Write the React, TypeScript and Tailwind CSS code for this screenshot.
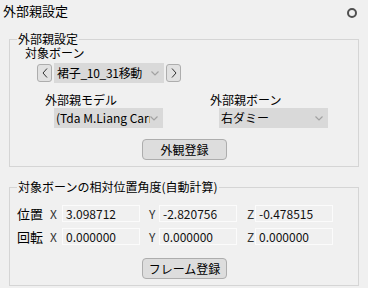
import type { ReactNode } from 'react'

function Chevron() {
  return (
    <svg width="8" height="5" viewBox="0 0 8 5" className="flex-shrink-0">
      <polyline points="0.5,0.5 4,4 7.5,0.5" fill="none" stroke="#a2a2a2" strokeWidth="1.2" />
    </svg>
  )
}

function ArrowButton({ dir }: { dir: 'left' | 'right' }) {
  return (
    <div className="w-[15px] h-[18px] flex items-center justify-center rounded-[3px] border border-[#adadad] bg-[#e1e1e1]">
      <svg width="6" height="10" viewBox="0 0 6 10">
        <polyline
          points={dir === 'left' ? '5,0.5 1,5 5,9.5' : '1,0.5 5,5 1,9.5'}
          fill="none"
          stroke="#333"
          strokeWidth="1"
        />
      </svg>
    </div>
  )
}

function Combo({ value, className }: { value: string; className: string }) {
  return (
    <div className={`h-[20px] flex items-center bg-[#d9d9d9] pl-[2px] pr-[5px] ${className}`}>
      <span className="flex-1 overflow-hidden whitespace-nowrap text-[12px] leading-[20px]">{value}</span>
      <Chevron />
    </div>
  )
}

function PushButton({ children }: { children: ReactNode }) {
  return (
    <div className="ml-[132px] w-[85px] h-[21px] flex items-center justify-center rounded-[4px] border border-[#adadad] bg-[#dddddd] text-[12px] leading-[14px]">
      {children}
    </div>
  )
}

function ValueBox({ value }: { value: string }) {
  return (
    <div className="w-[78px] h-[17px] flex items-center border border-[#fbfbfb] bg-[#f0f0f0] pl-[3px] text-[12px] leading-[15px] text-[#111]">
      {value}
    </div>
  )
}

function VectorRow({ label, x, y, z }: { label: string; x: string; y: string; z: string }) {
  return (
    <div className="flex items-center h-[17px] pl-[7px]">
      <span className="w-[33px] text-[13px] leading-[15px]">{label}</span>
      <span className="w-[12px] text-[12px] leading-[15px] text-[#333]">X</span>
      <ValueBox value={x} />
      <span className="ml-[9px] w-[10px] text-[12px] leading-[15px] text-[#333]">Y</span>
      <ValueBox value={y} />
      <span className="ml-[10px] w-[8px] text-[12px] leading-[15px] text-[#333]">Z</span>
      <ValueBox value={z} />
    </div>
  )
}

export default function App() {
  return (
    <div className="w-[368px] h-[288px] overflow-hidden bg-[#f0f0f0] text-black [font-family:'Noto_Sans_CJK_JP','Liberation_Sans',sans-serif]">
      {/* Header */}
      <div className="h-[32px] flex items-start justify-between">
        <span className="pl-[3px] pt-[3px] text-[13px] leading-[15px]">外部親設定</span>
        <span className="mt-[8px] mr-[11px] w-[10px] h-[10px] rounded-full border-2 border-[#505050]" />
      </div>

      {/* External parent */}
      <fieldset className="ml-[9px] w-[350px] border border-[#d5d5d5] pb-[6px]">
        <legend className="ml-[7px] px-[1px] text-[12px] leading-[14px]">外部親設定</legend>
        <div className="pl-[15px] text-[12px] leading-[14px]">対象ボーン</div>
        <div className="mt-[3px] ml-[27px] h-[20px] flex items-center">
          <ArrowButton dir="left" />
          <Combo value="裙子_10_31移動" className="ml-[2px] w-[110px] pl-[3px] tracking-[-0.3px]" />
          <div className="ml-[2px]">
            <ArrowButton dir="right" />
          </div>
        </div>
        <div className="mt-[10px] flex">
          <div className="ml-[35px] w-[165px] flex flex-col">
            <span className="text-[12px] leading-[14px]">外部親モデル</span>
            <Combo value="(Tda M.Liang Carr" className="mt-[1px] ml-[9px] w-[109px]" />
          </div>
          <div className="flex flex-col">
            <span className="text-[12px] leading-[14px]">外部親ボーン</span>
            <Combo value="右ダミー" className="mt-[1px] ml-[9px] w-[109px]" />
          </div>
        </div>
        <div className="mt-[11px]">
          <PushButton>外観登録</PushButton>
        </div>
      </fieldset>

      {/* Relative position */}
      <fieldset className="mt-[13px] ml-[9px] w-[350px] border border-[#d5d5d5] pb-[6px]">
        <legend className="ml-[7px] px-[1px] text-[12px] leading-[14px]">対象ボーンの相対位置角度(自動計算)</legend>
        <div className="mt-[11px] flex flex-col gap-[6px]">
          <VectorRow label="位置" x="3.098712" y="-2.820756" z="-0.478515" />
          <VectorRow label="回転" x="0.000000" y="0.000000" z="0.000000" />
        </div>
        <div className="mt-[13px]">
          <PushButton>フレーム登録</PushButton>
        </div>
      </fieldset>
    </div>
  )
}
